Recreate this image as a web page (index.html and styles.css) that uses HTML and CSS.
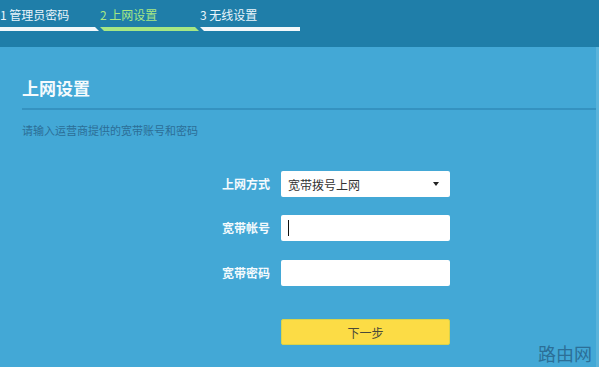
FILE: index.html
```html
<!DOCTYPE html>
<html>
<head>
<meta charset="utf-8">
<meta name="viewport" content="width=device-width, initial-scale=1">
<link rel="stylesheet" href="styles.css">
</head>
<body>

<div class="page">
  <div class="topbar">
    <div class="steps">
      <div class="step">
        <span class="step-text">1 管理员密码</span>
        <span class="step-bar first"></span>
      </div>
      <div class="step active">
        <span class="step-text">2 上网设置</span>
        <span class="step-bar"></span>
      </div>
      <div class="step">
        <span class="step-text">3 无线设置</span>
        <span class="step-bar last"></span>
      </div>
    </div>
  </div>

  <div class="main">
    <h2 class="title">上网设置</h2>
    <div class="rule"></div>
    <p class="hint">请输入运营商提供的宽带账号和密码</p>

    <form class="form">
      <label class="label">上网方式</label>
      <div class="field select">
        <span>宽带拨号上网</span>
        <span class="arrow"></span>
      </div>

      <label class="label">宽带帐号</label>
      <div class="field wide-gap"><span class="caret"></span></div>

      <label class="label">宽带密码</label>
      <div class="field"></div>

      <span></span>
      <button type="button" class="next">下一步</button>
    </form>

    <div class="mark">路由网</div>
  </div>
</div>

</body>
</html>
```

FILE: styles.css
```css
* {
  box-sizing: border-box;
}

body {
  margin: 0;
  background-color: #43a8d6;
  font-family: "Noto Sans CJK SC", "Noto Sans", sans-serif;
}

.page {
  width: 599px;
  height: 367px;
  overflow: hidden;
  position: relative;
}

.topbar {
  height: 47px;
  background-color: #1f7ea9;
}

.steps {
  display: flex;
  width: 301px;
}

.step {
  width: 100px;
  display: flex;
  flex-direction: column;
}

.step-text {
  height: 27px;
  padding-top: 7px;
  font-size: 12px;
  line-height: 16px;
  color: #eaf5fb;
  white-space: nowrap;
}

.step.active .step-text {
  color: #a6e784;
}

.step-bar {
  height: 4px;
  margin-right: 1px;
  background-color: #f2f8fb;
  clip-path: polygon(0 0, calc(100% - 4px) 0, 100% 100%, 4px 100%);
}

.step.active .step-bar {
  background-color: #a6e784;
}

.step-bar.first {
  clip-path: polygon(0 0, calc(100% - 4px) 0, 100% 100%, 0 100%);
}

.step-bar.last {
  margin-right: 0;
  clip-path: polygon(0 0, 100% 0, 100% 100%, 4px 100%);
}

.main {
  padding: 31px 0 0 22px;
  border-right: 3px solid #5ab3da;
  height: 320px;
}

.title {
  margin: 0;
  font-size: 17px;
  line-height: 20px;
  font-weight: bold;
  color: #f4fafd;
}

.rule {
  height: 2px;
  margin-top: 10px;
  background-color: #3592c0;
}

.hint {
  margin: 12px 0 0 0;
  font-size: 11px;
  line-height: 16px;
  color: #2c6e96;
}

.form {
  display: grid;
  grid-template-columns: 248px 169px;
  column-gap: 11px;
  margin-top: 33px;
}

.label {
  font-size: 12px;
  line-height: 26px;
  font-weight: bold;
  color: #f4fafd;
  text-align: right;
  margin-bottom: 18px;
}

.field {
  height: 26px;
  margin-bottom: 18px;
  background-color: #fff;
  border-radius: 2px;
  padding: 0 7px;
  display: flex;
  align-items: center;
  font-size: 12px;
  color: #333;
}

.field.wide-gap {
  margin-bottom: 19px;
}

.select {
  justify-content: space-between;
  padding-right: 11px;
}

.arrow {
  width: 0;
  height: 0;
  border-left: 3px solid transparent;
  border-right: 3px solid transparent;
  border-top: 4px solid #222;
}

.caret {
  width: 1px;
  height: 16px;
  background-color: #111;
}

.next {
  margin-top: 15px;
  height: 26px;
  border: 1px solid #d9d34a;
  border-radius: 2px;
  background-color: #fcdc45;
  font-family: inherit;
  font-size: 12px;
  color: #4a4a3a;
  padding: 0;
}

.mark {
  position: absolute;
  right: 7px;
  bottom: 3px;
  font-size: 18px;
  line-height: 22px;
  color: #2c6f97;
}
```
